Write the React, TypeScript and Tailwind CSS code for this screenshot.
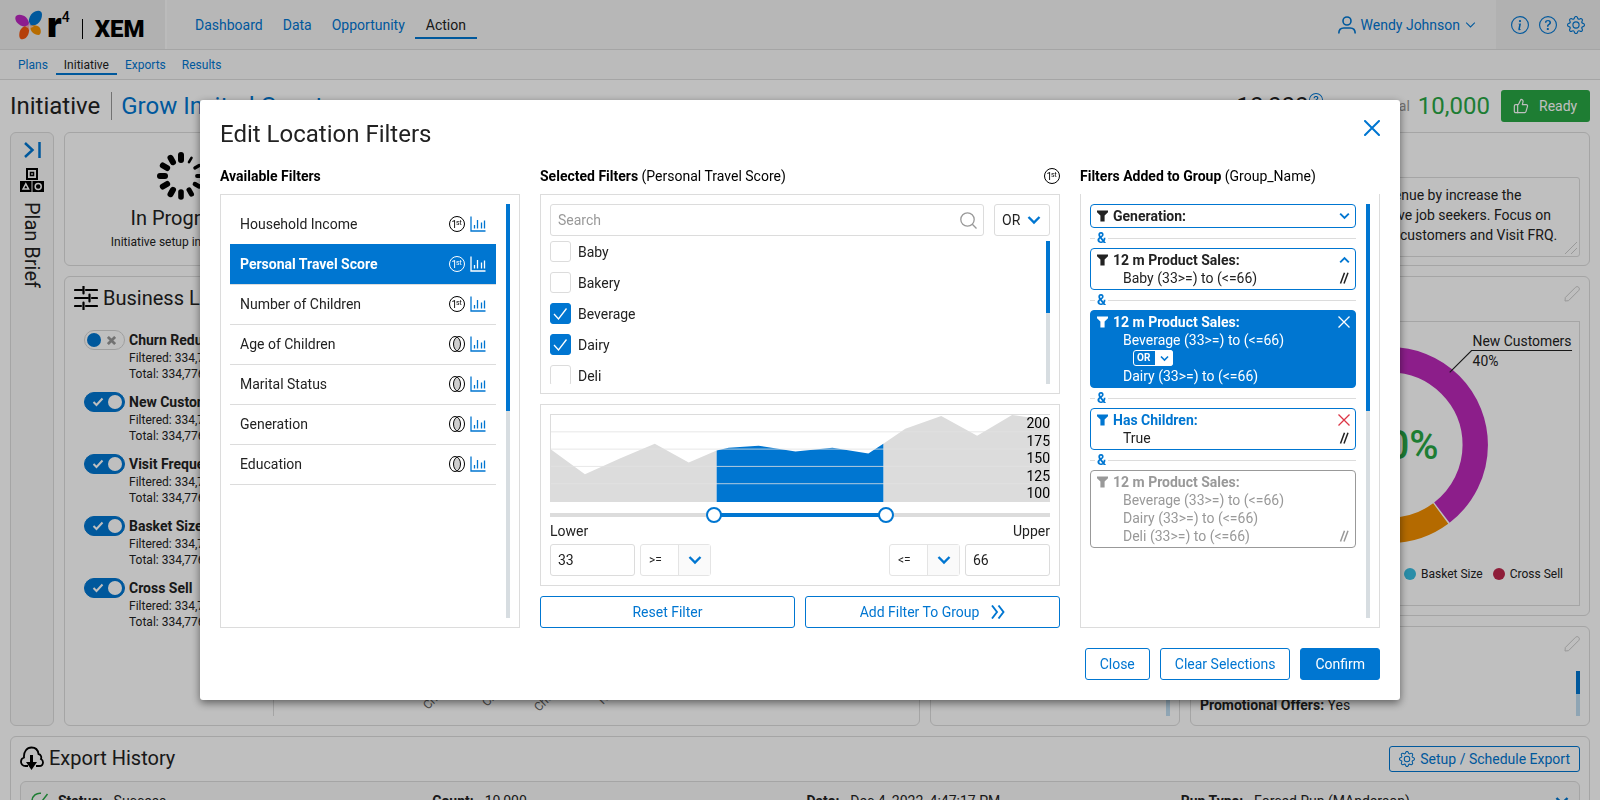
import React, { useState } from 'react'
import { ThumbsUp } from 'lucide-react'
import { BsGear, BsInfoCircle, BsQuestionCircle } from 'react-icons/bs'

type Source = 'first' | 'overlap'

const availableFilters: { name: string; source: Source }[] = [
  { name: 'Household Income', source: 'first' },
  { name: 'Personal Travel Score', source: 'first' },
  { name: 'Number of Children', source: 'first' },
  { name: 'Age of Children', source: 'overlap' },
  { name: 'Marital Status', source: 'overlap' },
  { name: 'Generation', source: 'overlap' },
  { name: 'Education', source: 'overlap' },
]

const products = ['Baby', 'Bakery', 'Beverage', 'Dairy', 'Deli']

const levers = [
  { name: 'Churn Reduction', on: false },
  { name: 'New Customers', on: true },
  { name: 'Visit Frequency', on: true },
  { name: 'Basket Size', on: true },
  { name: 'Cross Sell', on: true },
]

const exportRow = [
  { label: 'Status:', value: 'Success' },
  { label: 'Count:', value: '10,000' },
  { label: 'Date:', value: 'Dec 4, 2022, 4:47:17 PM' },
  { label: 'Run Type:', value: 'Forced Run (MAnderson)' },
]

const description = `Expand our total business revenue by increase the
number of customers and active job seekers. Focus on
the basket size of our existing customers and Visit FRQ.`

/* ---------- icons ---------- */

function Chevron({ className = '', up = false, weight = 2 }: { className?: string; up?: boolean; weight?: number }) {
  return (
    <svg viewBox="0 0 14 10" fill="none" stroke="currentColor" strokeWidth={weight} className={className} aria-hidden>
      <path d={up ? 'M1.5 8 7 2.5 12.5 8' : 'M1.5 2 7 7.5 12.5 2'} />
    </svg>
  )
}

function FirstIcon() {
  return (
    <svg viewBox="0 0 16 16" className="size-4 shrink-0" aria-hidden>
      <circle cx="8" cy="8" r="7.5" fill="none" stroke="currentColor" />
      <text x="2.5" y="11.5" fontSize="10" fill="currentColor">1</text>
      <text x="7" y="9" fontSize="7" fill="currentColor">st</text>
    </svg>
  )
}

function OverlapIcon() {
  return (
    <svg viewBox="0 0 16 16" className="size-4 shrink-0" fill="none" stroke="currentColor" aria-hidden>
      <path d="M8 1.4C10.2 3.6 11.4 6 11.4 8s-1.2 4.4-3.4 6.6C5.8 12.4 4.6 10 4.6 8S5.8 3.6 8 1.4Z" fill="#cfcfcf" stroke="none" />
      <ellipse cx="6" cy="8" rx="5.5" ry="7.5" />
      <ellipse cx="10" cy="8" rx="5.5" ry="7.5" />
    </svg>
  )
}

function BarsIcon() {
  return (
    <svg viewBox="0 0 16 16" className="size-4 shrink-0" fill="none" stroke="currentColor" aria-hidden>
      <path d="M1 .5V15h14.5" strokeWidth="1.3" />
      <path d="M4.5 9v3.500M7.500 4v8.500M11.500 6.500v6M14.500 4.500v8" strokeWidth="1.3" />
    </svg>
  )
}

function FunnelIcon() {
  return (
    <svg viewBox="0 0 11 12" className="h-3 w-[11px] shrink-0" fill="currentColor" aria-hidden>
      <path d="M0 .5h11v1.8L7.6 5.500V11.500H3.400V5.500L0 2.300Z" />
    </svg>
  )
}

function ResizeIcon() {
  return (
    <svg viewBox="0 0 11 12" className="h-3 w-[11px] shrink-0" fill="none" stroke="currentColor" strokeWidth="1.5" aria-hidden>
      <path d="M1.500 11.500 5.500 .8M5 11.500 9 .8" />
    </svg>
  )
}

function PencilIcon() {
  return (
    <svg viewBox="0 0 16 16" className="size-4" fill="none" stroke="currentColor" strokeLinejoin="round" aria-hidden>
      <path d="M1 15 1.300 11.500 11.500 1.300a2 2 0 0 1 3.200 3.200L4.500 14.700Z" />
    </svg>
  )
}

function CrossIcon() {
  return (
    <svg viewBox="0 0 12 12" className="size-3" stroke="currentColor" strokeWidth="1.3" aria-hidden>
      <path d="M.5.5l11 11M11.5.5l-11 11" />
    </svg>
  )
}

function Butterfly() {
  return (
    <svg viewBox="0 0 28 30" className="h-[30px] w-7" aria-hidden>
      <path d="M14 17C15 14 13 7 8 5.500 4 4 0 5 .3 8.500.6 13 6 17.500 14 17Z" fill="#bb27bf" />
      <path d="M15 16C12.500 12 14 4 20 1.500c3.500-1.500 7-1 7 3C27 10.500 23 16 15 16Z" fill="#0076d1" />
      <path d="M14 16.500c-4-1.500-8.500 1-9.500 6-.7 4 0 7 3 6.800 5-.5 7.500-7 6.500-12.800Z" fill="#f2560f" />
      <path d="M15 16.500c2-2 8-2 10 1.500 1.500 3 .8 7-1.500 7-4.500 0-8.500-4-8.500-8.500Z" fill="#f59100" />
      <path d="M14.500 12l1.200 3 3.300 1.500-3.300 1.500-1.200 3.500-1.500-3.500-3-1.500 3-1.500Z" fill="#f3d6e0" opacity=".7" />
    </svg>
  )
}

function Spinner() {
  return (
    <svg viewBox="-24 -24 48 48" className="size-12" stroke="#000" strokeLinecap="round" aria-hidden>
      {Array.from({ length: 12 }, (_, i) => (
        <line
          key={i}
          y1="-21"
          y2="-16"
          strokeWidth={i === 0 ? 6 : Math.min(6, 2 + i * 0.6)}
          transform={`rotate(${i * 30})`}
        />
      ))}
    </svg>
  )
}

/* ---------- small controls ---------- */

function ScrollTrack() {
  return (
    <div className="w-1 shrink-0 bg-[#d7dde1]">
      <div className="h-1/2 bg-[#0076d1]" />
    </div>
  )
}

function OperatorSelect({ id, label, value }: { id: string; label: string; value: string }) {
  return (
    <div className="relative">
      <select
        id={id}
        aria-label={label}
        defaultValue={value}
        className="h-8 w-[71px] appearance-none rounded-[3px] border border-[#e4e4e4] bg-white px-2 text-xs outline-none"
      >
        <option>{value}</option>
        <option>=</option>
      </select>
      <span className="pointer-events-none absolute inset-y-px right-px flex w-8 items-center justify-center border-l border-[#e4e4e4] bg-[#fafafa] text-[#0076d1]">
        <Chevron className="h-[10px] w-[14px]" weight={2.4} />
      </span>
    </div>
  )
}

function Toggle({ id, on }: { id: string; on: boolean }) {
  return (
    <span className="grid h-5 w-[41px] shrink-0 items-center">
      <input
        id={id}
        type="checkbox"
        defaultChecked={on}
        className="h-5 w-[41px] appearance-none rounded-full border border-[#d5d5d5] bg-white checked:border-[#0076d1] checked:bg-[#0076d1] [grid-area:1/1]"
      />
      <span className="pointer-events-none flex items-center justify-between px-[3px] [grid-area:1/1]">
        {on ? (
          <>
            <svg viewBox="0 0 12 10" className="ml-[5px] h-[10px] w-3" fill="none" stroke="#fff" strokeWidth="2"><path d="M1.500 5 4.500 8 10.500 1.500" /></svg>
            <span className="size-[14px] rounded-full bg-white" />
          </>
        ) : (
          <>
            <span className="size-[14px] rounded-full bg-[#0076d1]" />
            <svg viewBox="0 0 10 10" className="mr-[6px] size-[9px]" stroke="#999" strokeWidth="3"><path d="M1 1l8 8M9 1 1 9" /></svg>
          </>
        )}
      </span>
    </span>
  )
}

/* ---------- page behind the dialog ---------- */

function Header() {
  return (
    <header>
      <div className="flex h-[50px] border-b border-[#dcdcdc] bg-[#f5f5f5]">
        <a href="#home" className="flex w-[167px] items-center border-r-2 border-[#fafafa] bg-[#ececec] pl-[15px] text-black" aria-label="r4 XEM home">
          <Butterfly />
          <span className="ml-1 font-['Inter',sans-serif] text-[34px] leading-[30px] font-black">r</span>
          <sup className="-top-2 text-sm leading-none font-medium">4</sup>
          <span className="mx-3 mt-2 h-5 w-px bg-black" />
          <span className="mt-2 text-2xl leading-6 font-black">XEM</span>
        </a>
        <nav className="flex flex-1 items-center pl-[18px] text-sm">
          {['Dashboard', 'Data', 'Opportunity'].map((item) => (
            <a key={item} href={`#${item}`} className="h-7 px-[10px] leading-[28px] text-[#0076d1]">{item}</a>
          ))}
          <a href="#Action" className="h-7 border-b-2 border-[#0076d1] px-[11px] leading-[28px]">Action</a>
        </nav>
        <button className="flex items-center gap-[5px] pr-5 text-sm text-[#0076d1]">
          <svg viewBox="0 0 18 18" className="size-[18px]" fill="none" stroke="currentColor" strokeWidth="1.6" aria-hidden>
            <circle cx="9" cy="5" r="4" />
            <path d="M.8 17.500c0-3.500 2.200-5.500 5-5.500h6.400c2.800 0 5 2 5 5.500" />
          </svg>
          Wendy Johnson
          <Chevron className="h-2 w-[11px]" weight={1.3} />
        </button>
        <div className="flex w-[104px] items-center gap-[10px] bg-[#ececec] pl-[15px] text-lg text-[#0076d1]">
          <button aria-label="Info"><BsInfoCircle /></button>
          <button aria-label="Help"><BsQuestionCircle /></button>
          <button aria-label="Settings"><BsGear /></button>
        </div>
      </div>
      <nav className="flex h-[30px] items-center border-b border-[#dcdcdc] bg-[#fafafa] pl-[10px] text-xs">
        <a href="#plans" className="px-2 leading-5 text-[#0076d1]">Plans</a>
        <a href="#initiative" className="h-5 border-b-2 border-[#0076d1] px-2 leading-5">Initiative</a>
        <a href="#exports" className="px-2 leading-5 text-[#0076d1]">Exports</a>
        <a href="#results" className="px-2 leading-5 text-[#0076d1]">Results</a>
      </nav>
    </header>
  )
}

function TitleRow() {
  return (
    <div className="flex h-[52px] items-center px-[10px]">
      <h1 className="border-r border-[#999] pr-[11px] text-2xl leading-7">Initiative</h1>
      <a href="#name" className="pl-[9px] text-2xl leading-7 text-[#0076d1]">Grow Invited Guest</a>
      <div className="ml-auto flex items-center">
        <span className="text-2xl">10,000</span>
        <BsQuestionCircle className="mr-[56px] mb-3 size-[14px] text-[#0076d1]" />
        <span className="mr-2 text-sm text-[#999]">Total</span>
        <span className="mr-[11px] text-2xl text-[#28a745]">10,000</span>
        <button className="flex h-8 w-[89px] items-center gap-[10px] rounded-[3px] bg-[#28a745] pl-3 text-sm text-white">
          <ThumbsUp className="size-4" strokeWidth={1.8} />
          Ready
        </button>
      </div>
    </div>
  )
}

function PlanBrief() {
  return (
    <aside className="row-span-3 flex flex-col items-center rounded-md border border-[#dcdcdc] bg-[#f9f9f9] pt-[9px]">
      <button aria-label="Expand plan brief" className="text-[#0076d1]">
        <svg viewBox="0 0 17 16" className="h-4 w-[17px]" fill="none" stroke="currentColor" strokeWidth="2.5" aria-hidden>
          <path d="M1 1l7.500 7L1 15M15.500 0v16" />
        </svg>
      </button>
      <svg viewBox="0 0 24 24" className="mt-[10px] size-6" fill="none" stroke="#000" aria-hidden>
        <rect x="7" y="1" width="10" height="10" strokeWidth="2" />
        <rect x="10.5" y="4.5" width="3" height="3" strokeWidth="1.5" />
        <path d="M0 13h11.500v11H0ZM12.500 13H24v11H12.500Z" fill="#000" stroke="none" />
        <path d="M3 21l2.800-5.200L8.600 21Z" stroke="#fff" strokeWidth="1.5" />
        <circle cx="18.2" cy="18.5" r="3" stroke="#fff" strokeWidth="1.5" />
      </svg>
      <span className="mt-[10px] text-xl leading-6 [writing-mode:vertical-rl]">Plan Brief</span>
    </aside>
  )
}

function BusinessLevers() {
  return (
    <section className="row-span-2 flex rounded-md border border-[#dcdcdc]">
      <div className="my-[9px] w-[209px] border-r border-[#dcdcdc]">
        <h2 className="flex items-center gap-[5px] pl-[9px] text-xl leading-6">
          <svg viewBox="0 0 24 24" className="size-6" stroke="#000" strokeWidth="2.2" aria-hidden>
            <path d="M1 4h7M12 4h11M1 12h13M18 12h5M1 20h6M12 20h11" strokeLinecap="round" />
            <path d="M9.500.5v7M15.500 8.500v7M9.500 16.500v7" strokeLinecap="round" />
          </svg>
          Business Levers
        </h2>
        <div className="mt-5 flex flex-col gap-[10px] pl-[19px]">
          {levers.map((lever, i) => (
            <div key={lever.name} className="flex gap-1">
              <Toggle id={`lever-${i}`} on={lever.on} />
              <div className="text-xs leading-4">
                <label htmlFor={`lever-${i}`} className="block text-sm leading-5 font-bold whitespace-nowrap">{lever.name}</label>
                <p>Filtered: 334,776</p>
                <p>Total: 334,776</p>
              </div>
            </div>
          ))}
        </div>
      </div>
      <svg className="h-full min-w-0 flex-1" fill="#666" fontSize="12" aria-label="Levers chart">
        <text x="154" y="433" transform="rotate(-45 154 433)">Churn</text>
        <text x="213" y="430" transform="rotate(-45 213 430)">Cross Sell</text>
        <text x="265" y="435" transform="rotate(-45 265 435)">Churn Risk</text>
        <text x="329" y="428" transform="rotate(-45 329 428)">New</text>
      </svg>
    </section>
  )
}

function DonutCard() {
  return (
    <section className="flex flex-col rounded-md border border-[#dcdcdc] px-[9px] pb-[9px]">
      <button aria-label="Edit chart" className="mt-[9px] mb-[19px] self-end text-[#ccc]"><PencilIcon /></button>
      <div className="flex flex-1 flex-col border border-[#dcdcdc]">
        <svg viewBox="0 0 380 244" className="h-[244px] w-full" aria-label="Customer split">
          <g fill="none" strokeWidth="25.5" transform="translate(190 123)">
            <circle r="85.7" stroke="#bb29b9" pathLength="360" strokeDasharray="142.5 217.5" transform="rotate(-90)" />
            <circle r="85.7" stroke="#f08e00" pathLength="360" strokeDasharray="80 280" transform="rotate(53.5)" />
            <circle r="85.7" stroke="#38bde0" pathLength="360" strokeDasharray="136 224" transform="rotate(134)" />
          </g>
          <text x="190" y="137" fontSize="40" fontWeight="500" fill="#28a745" textAnchor="middle">100%</text>
          <path d="M250 50 272 28H373" fill="none" stroke="#222" strokeWidth="1.2" />
          <text x="273" y="23" fontSize="14" fill="#222">New Customers</text>
          <text x="273" y="44" fontSize="14" fill="#222">40%</text>
        </svg>
        <ul className="flex justify-end gap-[10px] pr-4 text-xs leading-4">
          <li className="flex items-center gap-[5px]"><i className="size-3 rounded-full bg-[#f08e00]" />Churn</li>
          <li className="flex items-center gap-[5px]"><i className="size-3 rounded-full bg-[#bb29b9]" />New Customers</li>
          <li className="flex items-center gap-[5px]"><i className="size-3 rounded-full bg-[#38bde0]" />Basket Size</li>
          <li className="flex items-center gap-[5px]"><i className="size-3 rounded-full bg-[#be274d]" />Cross Sell</li>
        </ul>
      </div>
    </section>
  )
}

function ExportHistory() {
  return (
    <section className="mx-[10px] mt-[10px] rounded-md border border-[#dcdcdc] p-[9px]">
      <div className="flex items-start justify-between">
        <h2 className="flex items-center gap-[5px] text-xl leading-6">
          <svg viewBox="0 0 24 24" className="size-6" fill="none" stroke="#000" strokeWidth="1.8" aria-hidden>
            <path d="M8 20H5.500C2.500 20 1 18 1 15.500c0-2 1.300-3.500 3-4C3.500 5.500 7 1.500 11.500 1.500c4 0 6.500 2.500 7 6.500 3 .5 3 4 2.500 5 1.500.8 2 2 2 3.200 0 2.300-1.500 3.800-3.800 3.800H16" />
            <path d="M10 9h3v7h4l-5.500 8L6 16h4Z" fill="#000" stroke="none" />
          </svg>
          Export History
        </h2>
        <button className="flex h-[26px] items-center gap-[5px] rounded-[3px] border border-[#0076d1] px-[9px] text-sm text-[#0076d1]">
          <BsGear className="size-4" />
          Setup / Schedule Export
        </button>
      </div>
      <div className="mt-[9px] flex h-10 items-center rounded-md border border-[#dcdcdc] bg-[#f9f9f9] pr-[10px] pl-[10px] text-sm">
        <svg viewBox="0 0 18 18" className="mr-[9px] size-[18px]" fill="none" stroke="#28a745" strokeWidth="1.5" aria-hidden>
          <path d="M10 1.200A8 8 0 1 0 17 9M4.500 9l3.500 4L16.500 2" />
        </svg>
        <div className="grid flex-1 grid-cols-4">
          {exportRow.map((cell) => (
            <p key={cell.label}><b className="mr-[11px]">{cell.label}</b>{cell.value}</p>
          ))}
        </div>
        <Chevron className="h-[10px] w-[14px] text-[#0076d1]" weight={2.4} />
      </div>
    </section>
  )
}

function Page() {
  return (
    <div className="h-screen overflow-hidden bg-white">
      <Header />
      <TitleRow />
      <main className="grid grid-cols-[44px_minmax(0,1fr)_250px_400px] grid-rows-[134px_340px_100px] gap-[10px] px-[10px]">
        <PlanBrief />
        <div className="col-span-2 flex gap-[10px]">
          <section className="flex w-[234px] flex-col items-center rounded-md border border-[#dcdcdc] pt-[19px]">
            <Spinner />
            <h2 className="mt-[6px] text-xl leading-6">In Progress</h2>
            <p className="mt-1 text-xs leading-4">Initiative setup in progress</p>
          </section>
          <section className="flex-1 rounded-md border border-[#dcdcdc]" />
        </div>
        <section className="rounded-md border border-[#dcdcdc] px-[9px] pt-11">
          <div className="relative">
            <textarea
              aria-label="Description"
              defaultValue={description}
              className="block h-20 w-full resize-none overflow-hidden rounded-[3px] border border-[#dcdcdc] px-[10px] py-[7px] text-sm leading-5 whitespace-pre"
            />
            <svg viewBox="0 0 12 12" className="pointer-events-none absolute right-[3px] bottom-[3px] size-3" stroke="#ccc" aria-hidden>
              <path d="M0 12 12 0M6 12l6-6" />
            </svg>
          </div>
        </section>
        <BusinessLevers />
        <section className="row-span-2 flex justify-end rounded-md border border-[#dcdcdc] p-[9px]">
          <div className="w-1 bg-[#bfddf1]" />
        </section>
        <DonutCard />
        <section className="flex justify-between rounded-md border border-[#dcdcdc] px-[9px] py-[9px]">
          <p className="self-end pb-px text-sm leading-5"><b>Promotional Offers:</b> Yes</p>
          <div className="flex flex-col items-end justify-between">
            <button aria-label="Edit offers" className="text-[#ccc]"><PencilIcon /></button>
            <div className="h-[45px] w-1 bg-[#bfddf1]"><div className="h-1/2 bg-[#0076d1]" /></div>
          </div>
        </section>
      </main>
      <ExportHistory />
    </div>
  )
}

/* ---------- dialog ---------- */

function AvailableFilters() {
  const [active, setActive] = useState('Personal Travel Score')
  return (
    <section>
      <h3 className="text-sm leading-5 font-bold text-black">Available Filters</h3>
      <div className="mt-2 flex h-[434px] gap-[10px] border border-[#dcdcdc] p-[9px]">
        <ul className="flex-1 self-start border-b border-[#dcdcdc]">
          {availableFilters.map((filter, i) => {
            const isActive = filter.name === active
            return (
              <li key={filter.name}>
                <button
                  onClick={() => setActive(filter.name)}
                  className={`flex h-10 w-full items-center gap-[5px] border-t px-[10px] pb-[2px] text-left text-sm ${
                    isActive ? 'border-[#0076d1] bg-[#0076d1] font-bold text-white' : i === 0 ? 'border-transparent' : 'border-[#dcdcdc]'
                  }`}
                >
                  <span className="flex-1">{filter.name}</span>
                  <span className={isActive ? 'font-normal text-white' : 'text-black'}>
                    {filter.source === 'first' ? <FirstIcon /> : <OverlapIcon />}
                  </span>
                  <span className={isActive ? 'text-white' : 'text-[#0076d1]'}><BarsIcon /></span>
                </button>
              </li>
            )
          })}
        </ul>
        <ScrollTrack />
      </div>
    </section>
  )
}

function RangeChart() {
  return (
    <div className="relative h-[88px] border-t border-l border-[#dcdcdc]">
      <svg viewBox="0 0 500 88" preserveAspectRatio="none" className="size-full" aria-label="Score distribution">
        <path d="M0 35 34 60 69 44 104 29 138 48 166 36V88H0ZM333 29 355 14 391 1 427 21 462 0 490 4 500 6V88H333Z" fill="#dcdcdc" />
        <path d="M166 36 178 33 208 31 245 37 282 33 318 39 333 29V88H166Z" fill="#0076d1" />
        <path d="M0 17H500M0 34.500H500M0 52H500M0 69.500H500" stroke="#e2e2e2" opacity=".8" />
      </svg>
      <ol className="absolute inset-y-0 right-0 flex flex-col justify-between text-right text-sm leading-[17px] text-black">
        <li>200</li>
        <li>175</li>
        <li>150</li>
        <li>125</li>
        <li>100</li>
      </ol>
    </div>
  )
}

const thumb =
  'pointer-events-none absolute inset-0 h-4 w-full appearance-none bg-transparent [&::-webkit-slider-thumb]:pointer-events-auto [&::-webkit-slider-thumb]:size-4 [&::-webkit-slider-thumb]:appearance-none [&::-webkit-slider-thumb]:rounded-full [&::-webkit-slider-thumb]:border-2 [&::-webkit-slider-thumb]:border-[#0076d1] [&::-webkit-slider-thumb]:bg-white'

function RangeSlider() {
  const [low, setLow] = useState(322)
  const [high, setHigh] = useState(677)
  return (
    <div className="relative mt-[5px] flex h-4 items-center">
      <div className="h-1 w-full bg-[#dcdcdc]">
        <div className="h-1 bg-[#0076d1]" style={{ marginLeft: `${low / 10}%`, width: `${(high - low) / 10}%` }} />
      </div>
      <input type="range" aria-label="Lower bound" min={0} max={1000} value={low} onChange={(e) => setLow(Number(e.target.value))} className={thumb} />
      <input type="range" aria-label="Upper bound" min={0} max={1000} value={high} onChange={(e) => setHigh(Number(e.target.value))} className={thumb} />
    </div>
  )
}

function SelectedFilters() {
  return (
    <section className="min-w-0">
      <div className="flex items-center justify-between text-black">
        <h3 className="text-sm leading-5"><b>Selected Filters</b> (Personal Travel Score)</h3>
        <FirstIcon />
      </div>
      <div className="mt-2 flex h-[434px] flex-col gap-[10px]">
        <div className="h-[200px] border border-[#dcdcdc] p-[9px]">
          <div className="flex gap-[10px]">
            <div className="relative flex-1">
              <input
                type="text"
                aria-label="Search"
                placeholder="Search"
                className="h-8 w-full rounded-[3px] border border-[#dcdcdc] px-[7px] text-sm outline-none placeholder:text-[#999]"
              />
              <svg viewBox="0 0 17 17" className="pointer-events-none absolute top-2 right-[7px] size-[17px]" fill="none" stroke="#999" strokeWidth="1.3" aria-hidden>
                <circle cx="7.5" cy="7.5" r="6.7" />
                <path d="M12.300 12.300 16.500 16.500" />
              </svg>
            </div>
            <div className="relative">
              <select aria-label="Join with" className="h-8 w-14 appearance-none rounded-[3px] border border-[#dcdcdc] bg-white px-[7px] text-sm outline-none">
                <option>OR</option>
                <option>AND</option>
              </select>
              <Chevron className="pointer-events-none absolute top-[11px] right-[9px] h-[10px] w-[14px] text-[#0076d1]" weight={2.4} />
            </div>
          </div>
          <div className="mt-[5px] flex h-[143px] overflow-hidden">
            <ul className="flex flex-1 flex-col gap-[10px]">
              {products.map((product) => (
                <li key={product} className="flex h-[21px] shrink-0 items-center gap-[7px] text-sm">
                  <span className="grid">
                    <input
                      id={product}
                      type="checkbox"
                      defaultChecked={product === 'Beverage' || product === 'Dairy'}
                      className="peer size-[21px] appearance-none rounded-[3px] border border-[#dcdcdc] checked:border-[#0076d1] checked:bg-[#0076d1] [grid-area:1/1]"
                    />
                    <svg viewBox="0 0 21 21" className="pointer-events-none invisible size-[21px] peer-checked:visible [grid-area:1/1]" fill="none" stroke="#fff" strokeWidth="1.3" aria-hidden>
                      <path d="M4 11l4.500 5L16.500 5.500" />
                    </svg>
                  </span>
                  <label htmlFor={product}>{product}</label>
                </li>
              ))}
            </ul>
            <ScrollTrack />
          </div>
        </div>

        <div className="border border-[#dcdcdc] p-[9px]">
          <RangeChart />
          <RangeSlider />
          <div className="flex justify-between text-sm leading-4">
            <label htmlFor="lower">Lower</label>
            <label htmlFor="upper">Upper</label>
          </div>
          <div className="mt-[5px] flex gap-[5px]">
            <input id="lower" type="text" defaultValue="33" className="h-8 w-[85px] rounded-[3px] border border-[#dcdcdc] px-[7px] text-sm outline-none" />
            <OperatorSelect id="lower-op" label="Lower operator" value=">=" />
            <span className="flex-1" />
            <OperatorSelect id="upper-op" label="Upper operator" value="<=" />
            <input id="upper" type="text" defaultValue="66" className="h-8 w-[85px] rounded-[3px] border border-[#dcdcdc] px-[7px] text-sm outline-none" />
          </div>
        </div>

        <div className="grid grid-cols-2 gap-[10px] text-sm text-[#0076d1]">
          <button className="h-8 rounded-[3px] border border-[#0076d1]">Reset Filter</button>
          <button className="flex h-8 items-center justify-center gap-3 rounded-[3px] border border-[#0076d1]">
            Add Filter To Group
            <svg viewBox="0 0 14 14" className="size-[14px]" fill="none" stroke="currentColor" strokeWidth="1.9" aria-hidden>
              <path d="M1 .5 6 7 1 13.500M7.500 .5l5 6.500-5 6.500" />
            </svg>
          </button>
        </div>
      </div>
    </section>
  )
}

function Separator() {
  return (
    <div className="flex h-5 items-center text-sm leading-5 font-bold text-[#0076d1]">
      <span className="w-[5px] border-t border-[#dcdcdc]" />
      <span className="mx-[2px]">&amp;</span>
      <span className="flex-1 border-t border-[#dcdcdc]" />
    </div>
  )
}

interface GroupCardProps {
  title: string
  titleClass?: string
  className: string
  action?: React.ReactNode
  resize?: boolean
  children?: React.ReactNode
}

function GroupCard({ title, titleClass = '', className, action, resize, children }: GroupCardProps) {
  return (
    <article className={`rounded-[4px] border py-[2px] pr-[5px] pl-[6px] text-sm leading-[18px] ${className}`}>
      <h4 className={`flex items-center gap-[5px] font-bold ${titleClass}`}>
        <FunnelIcon />
        <span className="flex-1">{title}</span>
        {action}
      </h4>
      {children && (
        <div className="flex items-end justify-between pl-[26px]">
          <div>{children}</div>
          {resize && <span className="mb-[3px]"><ResizeIcon /></span>}
        </div>
      )}
    </article>
  )
}

function AddedFilters() {
  return (
    <section>
      <h3 className="text-sm leading-5 text-black"><b>Filters Added to Group</b> (Group_Name)</h3>
      <div className="mt-2 flex h-[434px] gap-[10px] border-x border-b border-[#dcdcdc] px-[9px] pt-[10px] pb-[9px]">
        <div className="flex-1">
          <GroupCard
            title="Generation:"
            className="border-[#0076d1]"
            action={<button aria-label="Expand" className="text-[#0076d1]"><Chevron className="h-2 w-[11px]" weight={2.4} /></button>}
          />
          <Separator />
          <GroupCard
            title="12 m Product Sales:"
            className="border-[#0076d1]"
            resize
            action={<button aria-label="Collapse" className="text-[#0076d1]"><Chevron up className="h-2 w-[11px]" weight={2.4} /></button>}
          >
            <p>Baby (33&gt;=) to (&lt;=66)</p>
          </GroupCard>
          <Separator />
          <GroupCard
            title="12 m Product Sales:"
            className="border-[#0076d1] bg-[#0076d1] text-white"
            action={<button aria-label="Remove"><CrossIcon /></button>}
          >
            <p>Beverage (33&gt;=) to (&lt;=66)</p>
            <div className="flex h-[18px] items-center pl-[10px]">
              <div className="relative">
                <select aria-label="Join products with" className="block h-4 w-10 appearance-none rounded-[3px] border border-white bg-[#0076d1] px-[3px] text-[10px] leading-[14px] font-bold text-white outline-none">
                  <option>OR</option>
                  <option>AND</option>
                </select>
                <span className="pointer-events-none absolute inset-y-0 right-0 flex w-[18px] items-center justify-center rounded-r-[3px] bg-white text-[#0076d1]">
                  <Chevron className="h-[7px] w-[9px]" weight={2.4} />
                </span>
              </div>
            </div>
            <p>Dairy (33&gt;=) to (&lt;=66)</p>
          </GroupCard>
          <Separator />
          <GroupCard
            title="Has Children:"
            titleClass="text-[#0076d1]"
            className="border-[#0076d1]"
            resize
            action={<button aria-label="Remove" className="text-[#dc3545]"><CrossIcon /></button>}
          >
            <p>True</p>
          </GroupCard>
          <Separator />
          <GroupCard title="12 m Product Sales:" className="border-[#999] text-[#999]" resize>
            <p>Beverage (33&gt;=) to (&lt;=66)</p>
            <p>Dairy (33&gt;=) to (&lt;=66)</p>
            <p>Deli (33&gt;=) to (&lt;=66)</p>
          </GroupCard>
        </div>
        <ScrollTrack />
      </div>
    </section>
  )
}

function FilterDialog() {
  return (
    <div className="fixed inset-0 flex items-center justify-center bg-black/25">
      <div role="dialog" aria-labelledby="dialog-title" className="w-3/4 rounded-[3px] bg-white p-5 shadow-[0_3px_8px_rgba(0,0,0,0.5)]">
        <div className="flex h-7 items-start justify-between">
          <h2 id="dialog-title" className="text-2xl leading-7">Edit Location Filters</h2>
          <button aria-label="Close dialog" className="text-[#0076d1]">
            <svg viewBox="0 0 16 16" className="size-4" stroke="currentColor" strokeWidth="2" strokeLinecap="round" aria-hidden>
              <path d="M1 1l14 14M15 1 1 15" />
            </svg>
          </button>
        </div>
        <div className="mt-[18px] grid grid-cols-[300px_minmax(0,1fr)_300px] gap-5">
          <AvailableFilters />
          <SelectedFilters />
          <AddedFilters />
        </div>
        <div className="mt-5 flex justify-end gap-[10px] text-sm">
          <button className="h-8 rounded-[3px] border border-[#0076d1] px-[14px] text-[#0076d1]">Close</button>
          <button className="h-8 rounded-[3px] border border-[#0076d1] px-[14px] text-[#0076d1]">Clear Selections</button>
          <button className="h-8 rounded-[3px] border border-[#0076d1] bg-[#0076d1] px-[14px] text-white">Confirm</button>
        </div>
      </div>
    </div>
  )
}

export default function App() {
  return (
    <div className="font-['Roboto',sans-serif] text-[#222]">
      <Page />
      <FilterDialog />
    </div>
  )
}
